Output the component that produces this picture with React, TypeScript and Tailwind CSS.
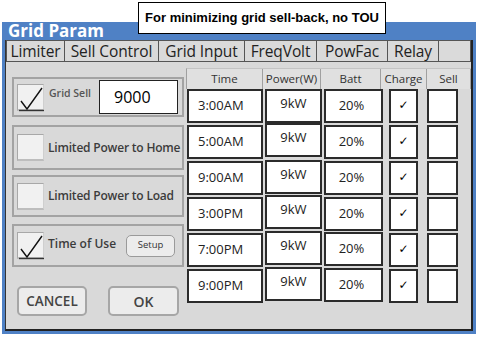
import React from 'react';

const font = { fontFamily: '"Open Sans", "Noto Sans", sans-serif' };

const tabs = [
  { label: 'Limiter', w: 'w-[59px]' },
  { label: 'Sell Control', w: 'w-[95px]' },
  { label: 'Grid Input', w: 'w-[87px]' },
  { label: 'FreqVolt', w: 'w-[73px]' },
  { label: 'PowFac', w: 'w-[72px]' },
  { label: 'Relay', w: 'w-[52px]' },
];

const headers = [
  { label: 'Time', w: 'w-[76px]' },
  { label: 'Power(W)', w: 'w-[58px]' },
  { label: 'Batt', w: 'w-[60px]' },
  { label: 'Charge', w: 'w-[46px]' },
  { label: 'Sell', w: 'w-[44px]' },
];

// small offsets copy the hand-placed boxes of the original
const rows = [
  { time: '3:00AM', pw: 'mt-0', batt: 'mt-0' },
  { time: '5:00AM', pw: 'mt-[-2px]', batt: 'mt-0' },
  { time: '9:00AM', pw: 'mt-[-1px]', batt: 'mt-0' },
  { time: '3:00PM', pw: 'mt-[-2px]', batt: 'mt-0' },
  { time: '7:00PM', pw: 'mt-[-2px]', batt: 'mt-[-1px]' },
  { time: '9:00PM', pw: 'mt-[-2px]', batt: 'mt-[-1px]' },
];

const BigCheck: React.FC<{ checked?: boolean }> = ({ checked }) => (
  <div className="relative shrink-0 w-[27px] h-[27px] bg-[#f1f1f1] border-t border-l border-[#a8a8a8] border-b-2 border-b-[#bdbdbd] border-r border-r-[#cfcfcf]">
    {checked && (
      <svg className="absolute left-0 top-0" width="27" height="27" viewBox="0 0 27 27">
        <path d="M3 16 L9 24 L24 3" fill="none" stroke="#111" strokeWidth="1.4" />
        <path d="M1 25.5 L26 25.5" stroke="#333" strokeWidth="1.4" />
      </svg>
    )}
  </div>
);

const Group: React.FC<{ h: string; mt: string; children: React.ReactNode }> = ({ h, mt, children }) => (
  <div className={`${h} ${mt} w-[172px] border-2 border-[#a3a3a3] bg-[#d9d9d9] flex items-center pl-[3px] gap-[4px]`}>
    {children}
  </div>
);

const Cell: React.FC<{ w: string; ml: string; extra?: string; children?: React.ReactNode }> = ({ w, ml, extra = '', children }) => (
  <div className={`${w} ${ml} ${extra} h-[34px] bg-white border-2 border-[#2b2b2b] flex items-center text-[13px] text-[#222]`}>
    {children}
  </div>
);

export default function App() {
  return (
    <div className="relative w-[480px] h-[341px] bg-white overflow-hidden" style={font}>
      <div className="pt-[22px] pl-[2px]">
        <div className="w-[474px] h-[312px] bg-[#4f81c5] flex flex-col pl-[3px] pr-[3px] pb-[3px]">
          <div className="h-[18px] flex items-center pl-[3px] pb-[2px] text-white font-bold text-[17px] leading-none">
            Grid Param
          </div>
          <div className="flex-1 bg-[#d9d9d9] border-l border-[#333] border-r-2 border-b-2 border-r-[#222] border-b-[#222] flex flex-col">
            {/* Tabs */}
            <div className="flex h-[22px]">
              {tabs.map((t) => (
                <div
                  key={t.label}
                  className={`${t.w} h-full border border-[#555] -ml-px first:ml-0 bg-[#dadada] flex items-center justify-center pt-[1px] text-[15.5px] text-[#222] leading-none tracking-[-0.1px]`}
                >
                  {t.label}
                </div>
              ))}
              <div className="flex-1 h-full border border-[#555] -ml-px bg-[#dadada]" />
            </div>

            <div className="flex pl-[6px]">
              {/* Left column */}
              <div className="flex flex-col pt-[15px] w-[172px]">
                <Group h="h-[40px]" mt="mt-0">
                  <BigCheck checked />
                  <span className="text-[10.5px] font-semibold text-[#555] mt-[-6px] ml-[1px] whitespace-nowrap">Grid Sell</span>
                  <div className="ml-auto mr-[4px] w-[79px] h-[34px] bg-white border border-[#222] flex items-center pl-[14px] text-[16px] text-black">
                    9000
                  </div>
                </Group>
                <Group h="h-[45px]" mt="mt-[8px]">
                  <BigCheck />
                  <span className="text-[12px] font-semibold text-[#3c3c3c] tracking-[-0.2px] whitespace-nowrap">Limited Power to Home</span>
                </Group>
                <Group h="h-[42px]" mt="mt-[5px]">
                  <BigCheck />
                  <span className="text-[12px] font-semibold text-[#3c3c3c] tracking-[-0.2px] whitespace-nowrap">Limited Power to Load</span>
                </Group>
                <Group h="h-[43px]" mt="mt-[7px]">
                  <BigCheck checked />
                  <span className="text-[12px] font-semibold text-[#3c3c3c] mt-[-4px] whitespace-nowrap">Time of Use</span>
                  <div className="ml-[6px] w-[49px] h-[22px] rounded-[5px] bg-[#ececec] border border-[#9a9a9a] flex items-center justify-center text-[9.5px] text-[#333]">
                    Setup
                  </div>
                </Group>
                <div className="flex mt-[19px] pl-[5px] gap-[21px]">
                  <div className="w-[70px] h-[30px] rounded-[5px] bg-[#ececec] border-2 border-[#a6a6a6] flex items-center justify-center text-[13.5px] font-semibold text-[#444]">
                    CANCEL
                  </div>
                  <div className="w-[71px] h-[30px] rounded-[5px] bg-[#ececec] border-2 border-[#a6a6a6] flex items-center justify-center text-[14px] font-semibold text-[#444]">
                    OK
                  </div>
                </div>
              </div>

              {/* Table */}
              <div className="flex flex-col pt-[6px] ml-[2px]">
                <div className="flex h-[21px] border-t border-[#c4c4c4] border-l border-l-[#a0a0a0]">
                  {headers.map((h) => (
                    <div
                      key={h.label}
                      className={`${h.w} h-full bg-[#e0e0e0] border-r border-[#a0a0a0] flex items-center justify-center text-[11.5px] text-[#333]`}
                    >
                      {h.label}
                    </div>
                  ))}
                </div>
                <div className="flex flex-col gap-[2px]">
                  {rows.map((r) => (
                    <div key={r.time} className="flex items-start h-[34px]">
                      <Cell w="w-[76px]" ml="ml-[1px]" extra="pl-[9px]">{r.time}</Cell>
                      <Cell w="w-[57px]" ml="ml-[2px]" extra={`${r.pw} justify-center pb-[5px]`}>9kW</Cell>
                      <Cell w="w-[59px]" ml="ml-[2px]" extra={`${r.batt} justify-center pr-[4px]`}>20%</Cell>
                      <Cell w="w-[29px]" ml="ml-[6px]" extra="justify-center pb-[3px]">
                        <span className="text-[12px] text-black" style={{ fontFamily: '"DejaVu Sans", sans-serif' }}>✓</span>
                      </Cell>
                      <Cell w="w-[31px]" ml="ml-[9px]" />
                    </div>
                  ))}
                </div>
              </div>
            </div>
          </div>
        </div>
      </div>

      {/* callout note over the title bar */}
      <div
        className="absolute left-[138px] top-[2px] w-[248px] h-[32px] bg-white border border-black flex items-center justify-center text-[13px] font-bold text-black"
        style={{ fontFamily: '"Liberation Sans", Arial, sans-serif' }}
      >
        For minimizing grid sell-back, no TOU
      </div>
    </div>
  );
}
